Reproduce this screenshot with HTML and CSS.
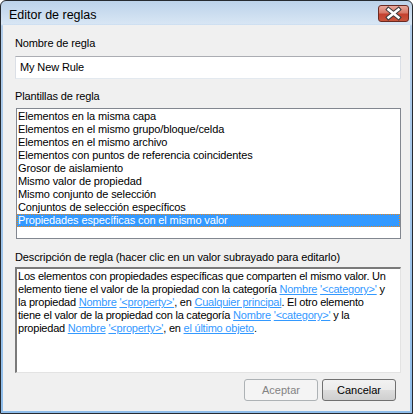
FILE: index.html
```html
<!DOCTYPE html>
<html lang="es">
<head>
  <meta charset="UTF-8">
  <title>Editor de reglas</title>
  <link rel="stylesheet" href="styles.css">
</head>
<body>
  <div class="window">
    <div class="titlebar">
      <span class="title">Editor de reglas</span>
      <button class="close" aria-label="Cerrar">
        <svg width="29" height="15" viewBox="0 0 29 15">
          <path d="M9.5 3.5 L19.5 11.5 M19.5 3.5 L9.5 11.5" stroke="#3c3c3c" stroke-width="4.6" stroke-linecap="square" fill="none"/>
          <path d="M9.5 3.5 L19.5 11.5 M19.5 3.5 L9.5 11.5" stroke="#ffffff" stroke-width="2.6" stroke-linecap="square" fill="none"/>
        </svg>
      </button>
    </div>

    <div class="content">
      <div class="label">Nombre de regla</div>
      <div class="textbox">My New Rule</div>

      <div class="label label-list">Plantillas de regla</div>
      <ul class="listbox">
        <li>Elementos en la misma capa</li>
        <li>Elementos en el mismo grupo/bloque/celda</li>
        <li>Elementos en el mismo archivo</li>
        <li>Elementos con puntos de referencia coincidentes</li>
        <li>Grosor de aislamiento</li>
        <li>Mismo valor de propiedad</li>
        <li>Mismo conjunto de selección</li>
        <li>Conjuntos de selección específicos</li>
        <li class="selected">Propiedades específicas con el mismo valor</li>
      </ul>

      <div class="label label-desc">Descripción de regla (hacer clic en un valor subrayado para editarlo)</div>
      <div class="desc">
        <div class="line">Los elementos con propiedades específicas que comparten el mismo valor. Un</div>
        <div class="line">elemento tiene el valor de la propiedad con la categoría <a href="#">Nombre</a> <a href="#">'&lt;category&gt;'</a> y</div>
        <div class="line">la propiedad <a href="#">Nombre</a> <a href="#">'&lt;property&gt;'</a>, en <a href="#">Cualquier principal</a>. El otro elemento</div>
        <div class="line">tiene el valor de la propiedad con la categoría <a href="#">Nombre</a> <a href="#">'&lt;category&gt;'</a> y la</div>
        <div class="line">propiedad <a href="#">Nombre</a> <a href="#">'&lt;property&gt;'</a>, en <a href="#">el último objeto</a>.</div>
      </div>

      <div class="buttons">
        <button class="btn" disabled>Aceptar</button>
        <button class="btn">Cancelar</button>
      </div>
    </div>
  </div>
</body>
</html>
```

FILE: styles.css
```css
* {
  box-sizing: border-box;
}
body {
  margin: 0;
  background: #ffffff;
  font-family: 'Liberation Sans', Arial, sans-serif;
  font-size: 11px;
  letter-spacing: -0.12px;
  color: #000;
}
.window {
  width: 413px;
  height: 414px;
  border: 1px solid #262a30;
  border-radius: 6px 6px 0 0;
  background: linear-gradient(to bottom, #bcd2ea 0, #d8e6f4 23px, #b2cdea 25px, #8fbdea 100%);
  padding: 0 2px 2px;
  display: flex;
  flex-direction: column;
}
.titlebar {
  height: 24px;
  display: flex;
  justify-content: space-between;
  align-items: flex-start;
  padding-left: 6px;
}
.title {
  font-size: 12.5px;
  line-height: 15px;
  margin-top: 7px;
  letter-spacing: 0;
  color: #000;
}
.close {
  width: 31px;
  height: 17px;
  margin-top: 4px;
  margin-right: 1px;
  padding: 0;
  border: 1px solid #6b2a22;
  border-radius: 3px;
  background: linear-gradient(to bottom, #e8a89c 0%, #d87a69 45%, #c4412f 55%, #c9553c 100%);
  display: flex;
  align-items: center;
  justify-content: center;
}
.content {
  flex: 1;
  background: #f0f0f0;
  padding: 11px 9px 0 12px;
  display: flex;
  flex-direction: column;
}
.label {
  line-height: 15px;
  height: 15px;
  white-space: nowrap;
}
.textbox {
  margin-top: 5px;
  height: 23px;
  background: #fff;
  border: 1px solid #dbdfe6;
  border-top-color: #abadb3;
  border-bottom-color: #e3e9ef;
  padding: 0 4px;
  line-height: 21px;
}
.label-list {
  margin-top: 10px;
}
.listbox {
  list-style: none;
  margin: 4px 0 0 1px;
  padding: 1px 0 0;
  height: 131px;
  background: #fff;
  border: 1px solid #828790;
}
.listbox li {
  height: 13px;
  line-height: 13px;
  padding-left: 1px;
  white-space: nowrap;
}
.listbox .selected {
  background: #3399ff;
  color: #fff;
  outline: 1px dotted #e8861e;
  outline-offset: -1px;
}
.label-desc {
  margin-top: 11px;
}
.desc {
  margin-top: 2px;
  height: 106px;
  background: #fff;
  border-top: 2px solid #7a7a7a;
  border-left: 2px solid #7a7a7a;
  border-right: 1px solid #e3e3e3;
  border-bottom: 1px solid #e3e3e3;
  padding: 1px 0 0 1px;
}
.desc .line {
  line-height: 13px;
  letter-spacing: -0.22px;
  white-space: nowrap;
}
.desc a {
  color: #3399ff;
  text-decoration: underline;
}
.buttons {
  margin-top: 6px;
  margin-right: 5px;
  display: flex;
  justify-content: flex-end;
  gap: 4px;
}
.btn {
  width: 74px;
  height: 22px;
  font-family: inherit;
  font-size: 11px;
  color: #000;
  border: 1px solid #707070;
  border-radius: 3px;
  background: linear-gradient(to bottom, #f2f2f2 0%, #ebebeb 50%, #dddddd 50%, #cfcfcf 100%);
  padding: 0;
}
.btn:disabled {
  color: #838383;
  border-color: #adb2b5;
  background: #f4f4f4;
}
```
